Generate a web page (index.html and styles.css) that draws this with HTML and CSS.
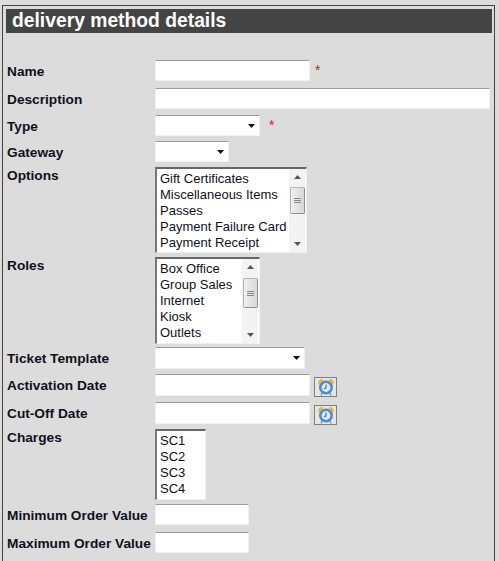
FILE: index.html
```html
<!DOCTYPE html>
<html lang="en">
<head>
  <meta charset="UTF-8">
  <title>Delivery method details</title>
  <link rel="stylesheet" href="styles.css">
</head>
<body>
  <div class="panel">
    <h1>delivery method details</h1>
    <form class="form">
      <label class="label">Name</label>
      <div class="field"><input class="text w-name" type="text"><span class="req">*</span></div>

      <label class="label">Description</label>
      <div class="field"><input class="text w-desc" type="text"></div>

      <label class="label">Type</label>
      <div class="field">
        <div class="select w-type"><svg class="arrow" viewBox="0 0 7 4"><path d="M0 0H7L3.5 4Z"/></svg></div>
        <span class="req req-type">*</span>
      </div>

      <label class="label">Gateway</label>
      <div class="field">
        <div class="select w-gateway"><svg class="arrow" viewBox="0 0 7 4"><path d="M0 0H7L3.5 4Z"/></svg></div>
      </div>

      <label class="label label-top">Options</label>
      <div class="field">
        <div class="list w-options">
          <ul class="items">
            <li>Gift Certificates</li>
            <li>Miscellaneous Items</li>
            <li>Passes</li>
            <li>Payment Failure Card</li>
            <li>Payment Receipt</li>
          </ul>
          <div class="scroll">
            <svg class="step" viewBox="0 0 7 4"><path d="M0 4H7L3.5 0Z"/></svg>
            <div class="thumb thumb-options"><span></span><span></span><span></span></div>
            <svg class="step step-down" viewBox="0 0 7 4"><path d="M0 0H7L3.5 4Z"/></svg>
          </div>
        </div>
      </div>

      <label class="label label-top">Roles</label>
      <div class="field">
        <div class="list w-roles">
          <ul class="items">
            <li>Box Office</li>
            <li>Group Sales</li>
            <li>Internet</li>
            <li>Kiosk</li>
            <li>Outlets</li>
          </ul>
          <div class="scroll">
            <svg class="step" viewBox="0 0 7 4"><path d="M0 4H7L3.5 0Z"/></svg>
            <div class="thumb thumb-roles"><span></span><span></span><span></span></div>
            <svg class="step step-down" viewBox="0 0 7 4"><path d="M0 0H7L3.5 4Z"/></svg>
          </div>
        </div>
      </div>

      <label class="label">Ticket Template</label>
      <div class="field">
        <div class="select w-ticket"><svg class="arrow" viewBox="0 0 7 4"><path d="M0 0H7L3.5 4Z"/></svg></div>
      </div>

      <label class="label">Activation Date</label>
      <div class="field">
        <input class="text w-name tall" type="text">
        <button class="cal" type="button">
          <svg viewBox="0 0 18 18" width="18" height="18">
            <path d="M1 5.500 Q1 1 5.500 1 L6.500 3 Q3.500 3.500 3 6.500Z" fill="#f2b22e"/>
            <path d="M17 5.500 Q17 1 12.500 1 L11.500 3 Q14.500 3.500 15 6.500Z" fill="#f2b22e"/>
            <path d="M5 15l-1 2.500M13 15l1 2.500" stroke="#999" stroke-width="1.500"/>
            <circle cx="9" cy="9.500" r="7" fill="#4a8ccc"/>
            <circle cx="9" cy="9.500" r="4.400" fill="#dfe9f3"/>
            <path d="M9 6.500V9.800L7 11" fill="none" stroke="#5a6f8a" stroke-width="1.200"/>
          </svg>
        </button>
      </div>

      <label class="label">Cut-Off Date</label>
      <div class="field">
        <input class="text w-name tall" type="text">
        <button class="cal" type="button">
          <svg viewBox="0 0 18 18" width="18" height="18">
            <path d="M1 5.500 Q1 1 5.500 1 L6.500 3 Q3.500 3.500 3 6.500Z" fill="#f2b22e"/>
            <path d="M17 5.500 Q17 1 12.500 1 L11.500 3 Q14.500 3.500 15 6.500Z" fill="#f2b22e"/>
            <path d="M5 15l-1 2.500M13 15l1 2.500" stroke="#999" stroke-width="1.500"/>
            <circle cx="9" cy="9.500" r="7" fill="#4a8ccc"/>
            <circle cx="9" cy="9.500" r="4.400" fill="#dfe9f3"/>
            <path d="M9 6.500V9.800L7 11" fill="none" stroke="#5a6f8a" stroke-width="1.200"/>
          </svg>
        </button>
      </div>

      <label class="label label-top">Charges</label>
      <div class="field">
        <div class="list w-charges">
          <ul class="items">
            <li>SC1</li>
            <li>SC2</li>
            <li>SC3</li>
            <li>SC4</li>
          </ul>
        </div>
      </div>

      <label class="label">Minimum Order Value</label>
      <div class="field"><input class="text w-value" type="text"></div>

      <label class="label">Maximum Order Value</label>
      <div class="field"><input class="text w-value" type="text"></div>
    </form>
  </div>
</body>
</html>
```

FILE: styles.css
```css
body {
  margin: 0;
  padding: 5px 4px 2px 2px;
  background: #dcdcdc;
  color: #10101c;
  font-family: "Liberation Sans", Arial, sans-serif;
}
.panel {
  height: 552px;
  border: 1px solid #444;
  padding: 3px 2px 0 3px;
}
h1 {
  margin: 0;
  height: 24px;
  padding-left: 6px;
  background: #444;
  color: #fff;
  font-size: 19.3px;
  font-weight: bold;
  line-height: 24px;
}
.form {
  display: grid;
  grid-template-columns: 148px 1fr;
  grid-template-rows: 28px 27px 26px 26px 90px 90px 27px 28px 27px 75px 28px 28px;
  margin-top: 27px;
  padding-left: 1px;
}
.label {
  padding-top: 1px;
  font-size: 13.7px;
  font-weight: bold;
  line-height: 21px;
  white-space: nowrap;
}
.label-top {
  padding-top: 0;
  margin-top: -2px;
}
.field {
  display: flex;
  align-items: flex-start;
}
.text, .select {
  box-sizing: border-box;
  height: 21px;
  margin: 0;
  padding: 0 2px;
  background: #fff;
  border: 1px solid #f0f0f0;
  border-top-color: #9c9c9c;
  border-radius: 0;
  outline: none;
}
.tall { height: 22px; }
.w-name { width: 155px; }
.w-desc { width: 335px; }
.w-type { width: 105px; }
.w-gateway { width: 74px; }
.w-ticket { width: 150px; height: 22px; }
.w-value { width: 94px; }
.req {
  margin-left: 5px;
  color: #f01010;
  font-size: 14px;
  line-height: 21px;
}
.req-type { margin-left: 9px; }
.select {
  display: flex;
  align-items: center;
  justify-content: flex-end;
  padding-right: 4px;
}
.arrow {
  width: 7px;
  height: 4px;
  fill: #111;
}
.list {
  box-sizing: border-box;
  display: flex;
  justify-content: space-between;
  background: #fff;
  border: 1px solid #f0f0f0;
  border-top: 2px solid #666;
  border-left: 2px solid #777;
}
.w-options { width: 152px; height: 86px; }
.w-roles { width: 105px; height: 87px; }
.w-charges { width: 51px; height: 71px; }
.items {
  margin: 0;
  padding: 2px 0 0 3px;
  list-style: none;
  font-size: 13px;
  line-height: 16px;
  white-space: nowrap;
}
.scroll {
  display: flex;
  flex-direction: column;
  align-items: center;
  width: 16px;
  margin-right: 1px;
  padding-top: 6px;
  background: #f3f3f3;
}
.step {
  width: 7px;
  height: 4px;
  fill: #555;
  flex: none;
}
.step-down { margin-top: auto; margin-bottom: 6px; }
.thumb {
  box-sizing: border-box;
  display: flex;
  flex-direction: column;
  align-items: center;
  justify-content: center;
  gap: 1px;
  width: 15px;
  height: 27px;
  background: linear-gradient(90deg, #f0f0f0, #d8d8d8);
  border: 1px solid #b4b4b4;
  border-right-color: #909090;
  border-bottom-color: #909090;
  border-radius: 2px;
}
.thumb-options { margin-top: 8px; }
.thumb-roles { margin-top: 9px; height: 30px; }
.thumb span {
  width: 7px;
  height: 1px;
  background: #888;
}
.cal {
  box-sizing: border-box;
  display: flex;
  align-items: center;
  justify-content: center;
  width: 23px;
  height: 20px;
  margin: 3px 0 0 4px;
  padding: 0;
  background: #e6e6e6;
  border: 1px solid #808080;
}
```
